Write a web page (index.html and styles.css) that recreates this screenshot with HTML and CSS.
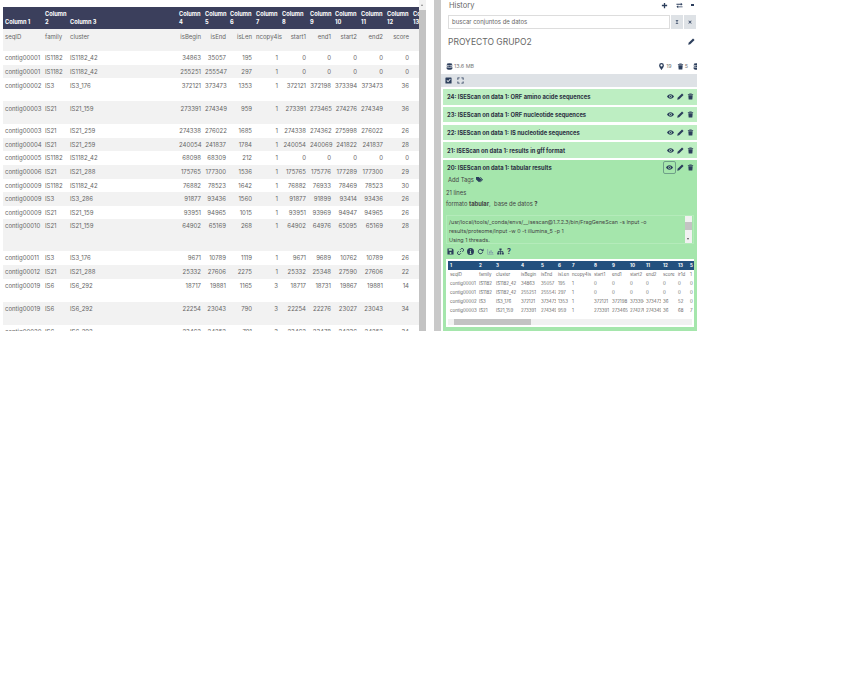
FILE: index.html
```html
<!DOCTYPE html>
<html lang="es">
<head>
  <meta charset="UTF-8">
  <title>Galaxy</title>
  <link rel="stylesheet" href="styles.css">
</head>
<body>
  <svg class="defs" width="0" height="0">
    <symbol id="i-eye" viewBox="0 0 16 16"><path d="M8 3C4 3 1.300 6 0 8c1.300 2 4 5 8 5s6.700-3 8-5c-1.300-2-4-5-8-5zm0 8a3 3 0 1 1 0-6 3 3 0 0 1 0 6z"/><circle cx="8" cy="8" r="1.500"/></symbol>
    <symbol id="i-pen" viewBox="0 0 16 16"><path d="M11.500 1 15 4.500 5 14.500 0.500 15.500 1.500 11z"/></symbol>
    <symbol id="i-trash" viewBox="0 0 16 16"><path d="M5.500 1h5l.5 1.500H14V4H2V2.500h3zM3 5h10l-.8 10H3.800z"/></symbol>
    <symbol id="i-plus" viewBox="0 0 16 16"><path d="M6.500 2h3v4.500H14v3H9.500V14h-3V9.500H2v-3h4.500z"/></symbol>
    <symbol id="i-swap" viewBox="0 0 16 16"><path d="M1 4h10V1.500L15 5l-4 3.500V6H1zM15 10H5V7.500L1 11l4 3.500V12h10z"/></symbol>
    <symbol id="i-db" viewBox="0 0 16 16"><ellipse cx="8" cy="3" rx="6.500" ry="2.500"/><path d="M1.500 5c1.500 2 11.500 2 13 0v2.500c-1.500 2-11.500 2-13 0zM1.500 9c1.500 2 11.500 2 13 0v4c-1.500 3-11.500 3-13 0z"/></symbol>
    <symbol id="i-pin" viewBox="0 0 16 16"><path d="M8 0a5.500 5.500 0 0 0-5.500 5.500C2.500 9 8 16 8 16s5.500-7 5.500-10.500A5.500 5.500 0 0 0 8 0zm0 8a2.500 2.500 0 1 1 0-5 2.500 2.500 0 0 1 0 5z"/></symbol>
    <symbol id="i-check" viewBox="0 0 16 16"><path d="M2 1h12a1 1 0 0 1 1 1v12a1 1 0 0 1-1 1H2a1 1 0 0 1-1-1V2a1 1 0 0 1 1-1zm1.500 7.500L7 12l6-6.500-1.500-1.500L7 9 5 7z" fill-rule="evenodd"/></symbol>
    <symbol id="i-expand" viewBox="0 0 16 16"><path d="M1 6V1h5v2H3v3zM10 1h5v5h-2V3h-3zM15 10v5h-5v-2h3v-3zM6 15H1v-5h2v3h3z"/></symbol>
    <symbol id="i-tags" viewBox="0 0 16 16"><path d="M0 2h6.500l6.500 6.500L7 14.500 0 8zM9 2h1.500L16 8.500 10 14.500 9 13.500l4.500-5z"/></symbol>
    <symbol id="i-save" viewBox="0 0 16 16"><path d="M1 1h11l3 3v11H1zm3 1.500v4h7v-4zM8 9a2.300 2.300 0 1 0 0 4.600A2.300 2.300 0 0 0 8 9z" fill-rule="evenodd"/></symbol>
    <symbol id="i-link" viewBox="0 0 16 16"><path d="M6.500 9.500l3-3M7 4l2-2a3.500 3.500 0 0 1 5 5l-2 2M9 12l-2 2a3.500 3.500 0 0 1-5-5l2-2" fill="none" stroke="currentColor" stroke-width="2"/></symbol>
    <symbol id="i-info" viewBox="0 0 16 16"><path d="M8 0a8 8 0 1 0 0 16A8 8 0 0 0 8 0zM7 3h2v2H7zM6.500 7H9v5h1v1.500H6V12h1V8.500h-.5z" fill-rule="evenodd"/></symbol>
    <symbol id="i-redo" viewBox="0 0 16 16"><path d="M13 8a5 5 0 1 1-1.500-3.500" fill="none" stroke="currentColor" stroke-width="2.200"/><path d="M15 1v6H9z"/></symbol>
    <symbol id="i-chart" viewBox="0 0 16 16"><path d="M1 2h1.500v11.500H15V15H1zM4.500 8H7v4.500H4.500zM8 5h2.500v7.500H8zM11.500 9H14v3.500h-2.500z"/></symbol>
    <symbol id="i-tree" viewBox="0 0 16 16"><path d="M5.500 1h5v4H8.700v2H14v3.500h1.500V15h-4v-4.500h1.300V8.300H8.700v2.200H10V15H6v-4.500h1.300V8.300H3.200v2.200h1.300V15h-4v-4.500H2V7h5.300V5H5.500z"/></symbol>
    <symbol id="i-filter" viewBox="0 0 16 16"><path d="M2 1h12L8 7.500zM2 15h12L8 8.500z"/></symbol>
    <symbol id="i-x" viewBox="0 0 16 16"><path d="M3.500 1.500 8 6l4.500-4.500 2 2L10 8l4.500 4.500-2 2L8 10l-4.500 4.500-2-2L6 8 1.500 3.500z"/></symbol>
  </svg>

  <div class="page">
    <div class="center">
      <div class="table-wrap">
        <table class="data">
          <colgroup>
            <col class="c40"><col class="c25"><col class="c109"><col class="c26"><col class="c25"><col class="c26"><col class="c26"><col class="c28"><col class="c25"><col class="c26"><col class="c26"><col class="c26"><col class="c26">
          </colgroup>
          <thead>
            <tr><th>Column 1</th><th>Column 2</th><th>Column 3</th><th>Column 4</th><th>Column 5</th><th>Column 6</th><th>Column 7</th><th>Column 8</th><th>Column 9</th><th>Column 10</th><th>Column 11</th><th>Column 12</th><th>Column 13</th></tr>
          </thead>
          <tbody id="rows"></tbody>
        </table>
      </div>
      <div class="vscroll"><span class="thumb"></span></div>
    </div>
    <div class="splitter"></div>

    <div class="history">
      <div class="hist-head">
        <span>History</span>
        <span class="head-icons">
          <svg class="ic"><use href="#i-plus"/></svg>
          <svg class="ic"><use href="#i-swap"/></svg>
          <span class="caret"></span>
        </span>
      </div>
      <div class="search">
        <div class="search-box">buscar conjuntos de datos</div>
        <div class="search-btn"><svg class="ic-sm"><use href="#i-filter"/></svg></div>
        <div class="search-btn"><svg class="ic-sm"><use href="#i-x"/></svg></div>
      </div>
      <div class="proj">
        <span>PROYECTO GRUPO2</span>
        <svg class="ic"><use href="#i-pen"/></svg>
      </div>
      <div class="stats">
        <span class="stat"><svg class="ic"><use href="#i-db"/></svg>13.6 MB</span>
        <span class="stats-right">
          <span class="stat"><svg class="ic"><use href="#i-pin"/></svg>19</span>
          <span class="stat"><svg class="ic"><use href="#i-trash"/></svg>5</span>
          <span class="stat"><svg class="ic"><use href="#i-db"/></svg></span>
        </span>
      </div>
      <div class="toolbar">
        <svg class="ic"><use href="#i-check"/></svg>
        <svg class="ic"><use href="#i-expand"/></svg>
      </div>

      <div class="items">
        <div class="item"><b>24: ISEScan on data 1: ORF amino acide sequences</b><span class="actions"><svg class="ic"><use href="#i-eye"/></svg><svg class="ic"><use href="#i-pen"/></svg><svg class="ic"><use href="#i-trash"/></svg></span></div>
        <div class="item"><b>23: ISEScan on data 1: ORF nucleotide sequences</b><span class="actions"><svg class="ic"><use href="#i-eye"/></svg><svg class="ic"><use href="#i-pen"/></svg><svg class="ic"><use href="#i-trash"/></svg></span></div>
        <div class="item"><b>22: ISEScan on data 1: IS nucleotide sequences</b><span class="actions"><svg class="ic"><use href="#i-eye"/></svg><svg class="ic"><use href="#i-pen"/></svg><svg class="ic"><use href="#i-trash"/></svg></span></div>
        <div class="item"><b>21: ISEScan on data 1: results in gff format</b><span class="actions"><svg class="ic"><use href="#i-eye"/></svg><svg class="ic"><use href="#i-pen"/></svg><svg class="ic"><use href="#i-trash"/></svg></span></div>

        <div class="item open">
          <div class="open-head"><b>20: ISEScan on data 1: tabular results</b><span class="actions"><span class="focus"><svg class="ic"><use href="#i-eye"/></svg></span><svg class="ic"><use href="#i-pen"/></svg><svg class="ic"><use href="#i-trash"/></svg></span></div>
          <div class="tags">Add Tags <svg class="ic"><use href="#i-tags"/></svg></div>
          <div class="meta first">21 lines</div>
          <div class="meta">formato <b>tabular</b>, &nbsp;base de datos <b>?</b></div>
          <div class="code">
            <div class="code-text">/usr/local/tools/_conda/envs/__isescan@1.7.2.3/bin/FragGeneScan -s Input -o results/proteome/Input -w 0 -t illumina_5 -p 1<br>Using 1 threads.</div>
            <div class="code-scroll"><span class="code-thumb"></span></div>
          </div>
          <div class="tools">
            <svg class="ic"><use href="#i-save"/></svg>
            <svg class="ic"><use href="#i-link"/></svg>
            <svg class="ic"><use href="#i-info"/></svg>
            <svg class="ic"><use href="#i-redo"/></svg>
            <svg class="ic light"><use href="#i-chart"/></svg>
            <svg class="ic"><use href="#i-tree"/></svg>
            <b class="help">?</b>
          </div>
          <div class="peek">
            <table class="mini">
              <colgroup>
                <col class="m29"><col class="m17"><col class="m25"><col class="m20"><col class="m17"><col class="m14"><col class="m22"><col class="m18"><col class="m18"><col class="m16"><col class="m17"><col class="m15"><col class="m12"><col class="m8">
              </colgroup>
              <thead><tr><th>1</th><th>2</th><th>3</th><th>4</th><th>5</th><th>6</th><th>7</th><th>8</th><th>9</th><th>10</th><th>11</th><th>12</th><th>13</th><th>5</th></tr></thead>
              <tbody id="mini-rows"></tbody>
            </table>
            <div class="hscroll"><span class="hthumb"></span></div>
          </div>
        </div>
      </div>
    </div>
  </div>

  <script>
    // filas de la tabla grande: datos + clase de altura
    var rows = [
      ['seqID','family','cluster','isBegin','isEnd','isLen','ncopy4is','start1','end1','start2','end2','score','h22'],
      ['contig00001','IS1182','IS1182_42','34863','35057','195','1','0','0','0','0','0',''],
      ['contig00001','IS1182','IS1182_42','255251','255547','297','1','0','0','0','0','0',''],
      ['contig00002','IS3','IS3_176','372121','373473','1353','1','372121','372198','373394','373473','36','h23'],
      ['contig00003','IS21','IS21_159','273391','274349','959','1','273391','273465','274276','274349','36','h23'],
      ['contig00003','IS21','IS21_259','274338','276022','1685','1','274338','274362','275998','276022','26',''],
      ['contig00004','IS21','IS21_259','240054','241837','1784','1','240054','240069','241822','241837','28',''],
      ['contig00005','IS1182','IS1182_42','68098','68309','212','1','0','0','0','0','0',''],
      ['contig00006','IS21','IS21_288','175765','177300','1536','1','175765','175776','177289','177300','29',''],
      ['contig00009','IS1182','IS1182_42','76882','78523','1642','1','76882','76933','78469','78523','30',''],
      ['contig00009','IS3','IS3_286','91877','93436','1560','1','91877','91899','93414','93436','26',''],
      ['contig00009','IS21','IS21_159','93951','94965','1015','1','93951','93969','94947','94965','26',''],
      ['contig00010','IS21','IS21_159','64902','65169','268','1','64902','64976','65095','65169','28','h32'],
      ['contig00011','IS3','IS3_176','9671','10789','1119','1','9671','9689','10762','10789','26',''],
      ['contig00012','IS21','IS21_288','25332','27606','2275','1','25332','25348','27590','27606','22',''],
      ['contig00019','IS6','IS6_292','18717','19881','1165','3','18717','18731','19867','19881','14','h23 low'],
      ['contig00019','IS6','IS6_292','22254','23043','790','3','22254','22276','23027','23043','34','h23 low'],
      ['contig00020','IS6','IS6_292','23462','24252','791','3','23462','23478','24236','24252','34','h23 low']
    ];
    var html = '';
    rows.forEach(function (r) {
      html += '<tr class="' + r[12] + '">';
      for (var i = 0; i < 12; i++) {
        html += '<td' + (i > 2 ? ' class="num"' : '') + '>' + r[i] + '</td>';
      }
      html += '<td></td></tr>';
    });
    document.getElementById('rows').innerHTML = html;

    var mini = [
      ['seqID','family','cluster','isBegin','isEnd','isLen','ncopy4is','start1','end1','start2','end2','score','ir1d','1'],
      ['contig00001','IS1182','IS1182_42','34863','35057','195','1','0','0','0','0','0','0','0'],
      ['contig00001','IS1182','IS1182_42','255251','255547','297','1','0','0','0','0','0','0','0'],
      ['contig00002','IS3','IS3_176','372121','373473','1353','1','372121','372198','373394','373473','36','52','0'],
      ['contig00003','IS21','IS21_159','273391','274349','959','1','273391','273465','274276','274349','36','68','7']
    ];
    document.getElementById('mini-rows').innerHTML = mini.map(function (r) {
      return '<tr><td>' + r.join('</td><td>') + '</td></tr>';
    }).join('');
  </script>
</body>
</html>
```

FILE: styles.css
```css
:root {
  --navy: #3b3f5c;
  --green: #bdeec2;
  --green-open: #a5e6ac;
  --grey-bar: #c3c3c3;
  --text: #666;
}

body {
  margin: 0;
  background: #fff;
  color: var(--text);
  font-family: Inter, "Open Sans", sans-serif;
  font-size: 6px;
}

.defs {
  display: block;
}

.ic {
  width: 7px;
  height: 7px;
  fill: #2c3e5c;
  color: #2c3e5c;
  flex: none;
}

.ic-sm {
  width: 4px;
  height: 4px;
  fill: #2c3e5c;
}

.page {
  display: flex;
  width: 697px;
  height: 331px;
  overflow: hidden;
}

/* panel central */
.center {
  width: 426px;
  margin-right: 8px;
  display: flex;
  flex: none;
}

.table-wrap {
  width: 416px;
  margin-left: 3px;
  padding-top: 7px;
  overflow: hidden;
  flex: none;
}

.data {
  border-collapse: collapse;
  table-layout: fixed;
  width: 434px;
  line-height: 8px;
}

.c25 { width: 25px; }
.c26 { width: 26px; }
.c28 { width: 28px; }
.c40 { width: 40px; }
.c109 { width: 109px; }

.data th {
  background: var(--navy);
  color: #fff;
  font-size: 5.700px;
  font-weight: 700;
  text-align: left;
  vertical-align: bottom;
  height: 22px;
  padding: 0 2px 3px;
  box-sizing: border-box;
}

.data td {
  height: 13.600px;
  padding: 3px 2px 0;
  box-sizing: border-box;
  vertical-align: top;
  white-space: nowrap;
}

.data td.num {
  text-align: right;
}

.data tr.h22 td { height: 22px; padding-top: 4px; }
.data tr.h23 td { height: 23px; padding-top: 4px; }
.data tr.h32 td { height: 32px; padding-top: 3px; }
.data tr.low td { padding-top: 3px; }

.data tbody tr:nth-child(odd) td {
  background: #f2f2f2;
}

.vscroll {
  position: relative;
  width: 7px;
  background: #f1f1f1;
  padding-top: 10px;
  box-sizing: border-box;
  display: flex;
}

/* flecha del scrollbar */
.vscroll::before {
  content: "";
  position: absolute;
  top: 4px;
  left: 2px;
  border: 1.500px solid transparent;
  border-top: 0;
  border-bottom: 2px solid #888;
}

.thumb {
  flex: 1;
  background: var(--grey-bar);
}

.splitter {
  width: 7px;
  flex: none;
  background: #c9c9c9;
}

/* panel history */
.history {
  width: 256px;
  flex: none;
  overflow: hidden;
}

.hist-head {
  display: flex;
  justify-content: space-between;
  align-items: center;
  height: 10px;
  padding: 0 2px 0 8px;
  font-size: 7.500px;
}

.head-icons {
  display: flex;
  align-items: center;
  gap: 8px;
}

.caret {
  width: 3px;
  border-top: 2px solid #2c3e5c;
  margin-right: 1px;
}

.search {
  display: flex;
  height: 14px;
  margin: 5px 1px 0 7px;
  gap: 1px;
}

.search-box {
  flex: 1;
  border: 1px solid #ddd;
  padding: 0 3px;
  line-height: 12px;
}

.search-btn {
  width: 12px;
  background: #dee2e6;
  display: flex;
  align-items: center;
  justify-content: center;
}

.proj {
  display: flex;
  justify-content: space-between;
  align-items: center;
  margin: 7px 2px 0 7px;
  height: 11px;
  font-size: 8.500px;
}

.stats {
  display: flex;
  justify-content: space-between;
  align-items: center;
  height: 8px;
  margin: 15px -3px 0 5px;
  font-size: 5.400px;
  color: #777;
}

.stat {
  display: inline-flex;
  align-items: center;
  gap: 1px;
}

.stats-right {
  display: flex;
  gap: 5px;
}

.toolbar {
  display: flex;
  align-items: center;
  gap: 5px;
  height: 13px;
  margin-top: 4px;
  padding-left: 4px;
  background: #dee2e6;
}

.items {
  padding: 2px 0 0 2px;
}

.item {
  display: flex;
  justify-content: space-between;
  align-items: center;
  height: 15.500px;
  margin-bottom: 2.300px;
  padding: 0 3px 0 4px;
  background: var(--green);
  color: #2c3143;
  font-size: 5.800px;
}

.actions {
  display: flex;
  align-items: center;
  gap: 3px;
}

.item.open {
  display: block;
  height: auto;
  margin: 0;
  padding: 0 0 10px;
  background: var(--green-open);
}

.open-head {
  display: flex;
  justify-content: space-between;
  align-items: center;
  height: 15px;
  padding: 0 3px 0 4px;
}

.focus {
  display: flex;
  padding: 2px;
  margin: -2px;
  border: 1px solid #6f9f88;
  border-radius: 2px;
}

.tags {
  display: flex;
  align-items: center;
  gap: 2px;
  margin-top: 1px;
  padding-left: 5px;
  color: #444;
}

.meta {
  margin-top: 3px;
  padding-left: 3px;
  color: #444;
  line-height: 8px;
}

.meta.first {
  margin-top: 6px;
}

.code {
  display: flex;
  height: 27px;
  margin: 7px 3px 0 3px;
  border: 1px solid #b4ebba;
  overflow: hidden;
}

.code-text {
  width: 228px;
  flex: none;
  padding: 2px 2px 0 2px;
  line-height: 9px;
  color: #444;
  font-size: 5.400px;
}

.code-scroll {
  position: relative;
  width: 7px;
  margin-left: auto;
  margin-right: 1px;
  background: #f1f1f1;
  padding-top: 6px;
  box-sizing: border-box;
}

.code-scroll::after {
  content: "";
  position: absolute;
  bottom: 3px;
  left: 2px;
  border: 1.500px solid transparent;
  border-bottom: 0;
  border-top: 2px solid #555;
}

.code-thumb {
  display: block;
  height: 8px;
  background: var(--grey-bar);
}

.tools {
  display: flex;
  align-items: center;
  gap: 3px;
  margin: 3px 0 0 4px;
  height: 8px;
}

.tools .light {
  fill: #7f9aa8;
}

.help {
  color: #2c3e5c;
  font-size: 7px;
}

.peek {
  margin: 4px 3px 0;
  padding: 2px;
  background: #fff;
  overflow: hidden;
}

.mini {
  border-collapse: collapse;
  table-layout: fixed;
  width: 248px;
  font-size: 4.400px;
  line-height: 5px;
  color: #666;
}

.m8 { width: 8px; }
.m12 { width: 12px; }
.m14 { width: 14px; }
.m15 { width: 15px; }
.m16 { width: 16px; }
.m17 { width: 17px; }
.m18 { width: 18px; }
.m20 { width: 20px; }
.m22 { width: 22px; }
.m25 { width: 25px; }
.m29 { width: 29px; }

.mini th {
  height: 9px;
  padding: 0 2px;
  background: #23507e;
  color: #fff;
  text-align: left;
  font-size: 4.500px;
}

.mini td {
  height: 9px;
  padding: 0 2px;
  white-space: nowrap;
  overflow: hidden;
}

.hscroll {
  height: 6px;
  margin-top: 4px;
  padding-left: 6px;
  background: #f1f1f1;
}

.hthumb {
  display: block;
  width: 77px;
  height: 6px;
  background: var(--grey-bar);
}
```
